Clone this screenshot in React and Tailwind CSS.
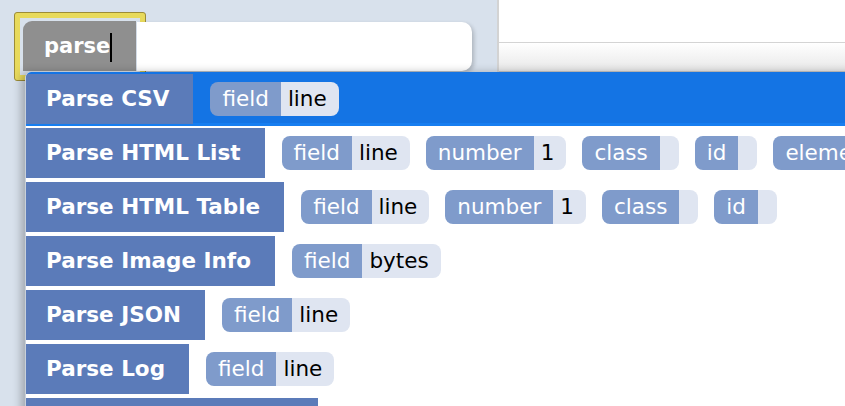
import React from 'react';

const rows = [
  { label: 'Parse CSV', chips: [['field', 'line']], selected: true },
  { label: 'Parse HTML List', chips: [['field', 'line'], ['number', '1'], ['class', ''], ['id', ''], ['element', '']] },
  { label: 'Parse HTML Table', chips: [['field', 'line'], ['number', '1'], ['class', ''], ['id', '']] },
  { label: 'Parse Image Info', chips: [['field', 'bytes']] },
  { label: 'Parse JSON', chips: [['field', 'line']] },
  { label: 'Parse Log', chips: [['field', 'line']] },
  { label: 'Parse Query String', chips: [['field', 'line']], wide: true },
];

const Chip = ({ name, value }) => (
  <div className="flex shrink-0 h-[34px] rounded-lg overflow-hidden text-[21.5px] leading-[34px]">
    <span className="bg-[#7f9bcb] text-white px-3">{name}</span>
    <span className="bg-[#dfe5f1] text-black pl-[7px] pr-3">{value}</span>
  </div>
);

const App = () => {
  return (
    <div
      className="relative w-[845px] h-[406px] overflow-hidden flex bg-white"
      style={{ fontFamily: '"DejaVu Sans", sans-serif' }}
    >
      {/* left panel with the command input */}
      <div className="w-[497px] shrink-0 bg-[#d8e1ec] pt-3 pl-[14px]">
        <div className="flex items-start">
          <div className="w-[132px] h-[69px] rounded-[3px] border border-[#9c8c38] bg-[#e8da5c] p-[5px]">
            <div className="w-full h-full bg-[#d8e1ec] p-[3px] pr-0">
              <div className="h-[50px] w-[113px] bg-[#8f8f8f] rounded-tl-[9px] flex items-center pl-[21px] pt-[2px] text-white font-bold text-[21px]">
                parse
                <span className="inline-block w-[2px] h-[29px] bg-black"></span>
              </div>
            </div>
          </div>
          <div className="mt-[10px] -ml-[9px] w-[335px] h-[49px] bg-white rounded-r-[10px] shadow-[2px_2px_4px_rgba(0,0,0,0.2)]"></div>
        </div>
      </div>

      {/* right pane */}
      <div className="flex-1 border-l-2 border-[#d3d3d3]">
        <div className="h-[43px] bg-white border-b border-[#d4d4d4]"></div>
        <div className="h-[29px] bg-gradient-to-b from-white to-[#e8e8e8] border-b border-[#c8c8c8]"></div>
      </div>

      {/* dropdown */}
      <div className="absolute left-[25px] top-[72px] w-[860px] h-[360px] bg-white rounded-tl-md overflow-hidden shadow-[-4px_0_8px_rgba(0,0,0,0.25)] border-l border-[#c9d0da]">
        {rows.map((row) => (
          <div
            key={row.label}
            className={`flex items-center h-[54px] py-[2px] ${row.selected ? 'bg-[#1474e4] shadow-[inset_0_-3px_0_#177ef0,inset_0_-1px_0_#1166cc]' : ''}`}
          >
            <div
              className={`h-[50px] shrink-0 bg-[#5b7bb9] text-white font-bold text-[21.5px] flex items-center pl-5 pr-6 ${row.wide ? 'w-[292px]' : ''}`}
            >
              {row.label}
            </div>
            <div className="flex gap-4 ml-[17px]">
              {row.chips.map(([n, v]) => (
                <Chip key={n} name={n} value={v} />
              ))}
            </div>
          </div>
        ))}
      </div>
    </div>
  );
};

export default App;
